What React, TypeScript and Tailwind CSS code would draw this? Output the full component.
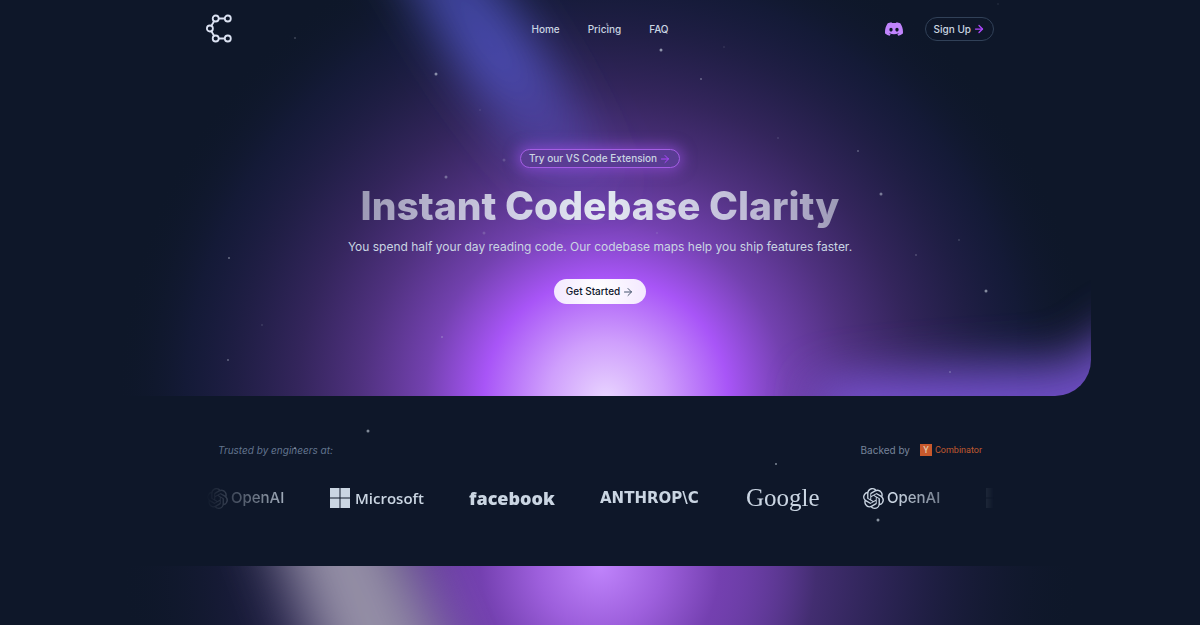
import React from 'react';
import { ArrowRight } from 'lucide-react';
import { SiDiscord, SiOpenai } from 'react-icons/si';

interface Star {
  x: number;
  y: number;
  r: number;
  opacity: number;
}

const stars: Star[] = [
  { x: 436, y: 74, r: 1.5, opacity: 0.6 },
  { x: 661, y: 50, r: 1.5, opacity: 0.65 },
  { x: 607, y: 24, r: 1.2, opacity: 0.35 },
  { x: 701, y: 79, r: 1, opacity: 0.4 },
  { x: 724, y: 47, r: 0.8, opacity: 0.2 },
  { x: 295, y: 38, r: 1, opacity: 0.25 },
  { x: 480, y: 110, r: 0.8, opacity: 0.2 },
  { x: 446, y: 177, r: 1.5, opacity: 0.4 },
  { x: 504, y: 160, r: 1.5, opacity: 0.2 },
  { x: 484, y: 233, r: 1.5, opacity: 0.2 },
  { x: 657, y: 233, r: 1, opacity: 0.15 },
  { x: 778, y: 138, r: 1, opacity: 0.15 },
  { x: 858, y: 151, r: 1, opacity: 0.35 },
  { x: 881, y: 194, r: 1.5, opacity: 0.5 },
  { x: 959, y: 240, r: 1, opacity: 0.2 },
  { x: 916, y: 255, r: 1, opacity: 0.25 },
  { x: 986, y: 291, r: 1.5, opacity: 0.6 },
  { x: 950, y: 372, r: 1, opacity: 0.3 },
  { x: 229, y: 258, r: 1, opacity: 0.45 },
  { x: 262, y: 325, r: 1, opacity: 0.15 },
  { x: 228, y: 360, r: 1, opacity: 0.4 },
  { x: 442, y: 337, r: 1, opacity: 0.3 },
  { x: 368, y: 431, r: 1.5, opacity: 0.6 },
  { x: 295, y: 448, r: 1, opacity: 0.5 },
  { x: 776, y: 464, r: 1, opacity: 0.6 },
  { x: 878, y: 520, r: 1.5, opacity: 0.65 },
  { x: 998, y: 4, r: 0.8, opacity: 0.15 },
];

const navLinks = ['Home', 'Pricing', 'FAQ'];

const Starfield: React.FC = () => (
  <svg
    className="pointer-events-none absolute top-0 left-1/2 z-20 -translate-x-1/2"
    width="1200"
    height="625"
    aria-hidden="true"
  >
    {stars.map(star => (
      <circle key={`${star.x}-${star.y}`} cx={star.x} cy={star.y} r={star.r} fill="#cbd5e1" opacity={star.opacity} />
    ))}
  </svg>
);

const HeroGlow: React.FC = () => (
  <div className="pointer-events-none absolute inset-y-0 left-1/2 w-[982px] -translate-x-1/2 overflow-hidden rounded-br-[36px]">
    <svg className="absolute bottom-0 left-0" width="982" height="396" aria-hidden="true">
      <defs>
        <radialGradient id="hero-core" gradientUnits="userSpaceOnUse" cx="497" cy="400" r="490">
          <stop offset="0" stopColor="#e9d5ff" />
          <stop offset="0.12" stopColor="#cf9ffc" />
          <stop offset="0.25" stopColor="#a855f7" />
          <stop offset="0.37" stopColor="#a255ee" stopOpacity="0.68" />
          <stop offset="0.5" stopColor="#9c50e4" stopOpacity="0.46" />
          <stop offset="0.63" stopColor="#9048d8" stopOpacity="0.29" />
          <stop offset="0.75" stopColor="#7a42d0" stopOpacity="0.17" />
          <stop offset="0.86" stopColor="#5038c0" stopOpacity="0.09" />
          <stop offset="1" stopColor="#0f172a" stopOpacity="0" />
        </radialGradient>
        <linearGradient id="hero-beam" x1="0" y1="0" x2="0" y2="1">
          <stop offset="0" stopColor="#6366f1" stopOpacity="0.5" />
          <stop offset="0.5" stopColor="#6366f1" stopOpacity="0.62" />
          <stop offset="1" stopColor="#6366f1" stopOpacity="0" />
        </linearGradient>
        <filter id="hero-blur" x="-60%" y="-60%" width="220%" height="220%">
          <feGaussianBlur stdDeviation="24" />
        </filter>
        <filter id="corner-blur" x="-60%" y="-200%" width="220%" height="500%">
          <feGaussianBlur stdDeviation="24" />
        </filter>
      </defs>
      <rect width="982" height="396" fill="url(#hero-core)" />
      <path d="M260 -80 L340 -80 L400 0 L530 210 L440 210 L320 20 Z" fill="url(#hero-beam)" filter="url(#hero-blur)" />
      <path
        d="M700 385 C780 370 880 368 960 362 L1015 320 L1060 320 L1060 480 L740 480 Z"
        fill="#8058e0"
        opacity="0.85"
        filter="url(#corner-blur)"
      />
    </svg>
  </div>
);

const FooterGlow: React.FC = () => (
  <svg
    className="pointer-events-none absolute top-0 left-1/2 -translate-x-1/2"
    width="982"
    height="400"
    aria-hidden="true"
  >
    <defs>
      <radialGradient id="lower-core" gradientUnits="userSpaceOnUse" cx="491" cy="0" r="480">
        <stop offset="0" stopColor="#c084fc" />
        <stop offset="0.13" stopColor="#9d5fdc" />
        <stop offset="0.25" stopColor="#7440b0" />
        <stop offset="0.45" stopColor="#a055f0" stopOpacity="0.36" />
        <stop offset="0.7" stopColor="#8048d8" stopOpacity="0.14" />
        <stop offset="1" stopColor="#0f172a" stopOpacity="0" />
      </radialGradient>
      <filter id="lower-blur" x="-60%" y="-60%" width="220%" height="220%">
        <feGaussianBlur stdDeviation="30" />
      </filter>
    </defs>
    <rect width="982" height="400" fill="url(#lower-core)" />
    <path d="M140 -100 L255 -100 L380 190 L250 190 Z" fill="#a39fb0" opacity="0.88" filter="url(#lower-blur)" />
  </svg>
);

const BrandMark: React.FC = () => (
  <svg width="28" height="30" viewBox="0 0 28 30" fill="none" stroke="#dbe2f2" strokeWidth="1.8" aria-hidden="true">
    <path d="M12.800 4.500h6M8.200 7 5.300 12M5.300 17l2.900 5M12.800 24.500h6" />
    <circle cx="9.700" cy="4.500" r="3" />
    <circle cx="21.800" cy="4.500" r="3" />
    <circle cx="3.900" cy="14.500" r="3" />
    <circle cx="9.700" cy="24.500" r="3" />
    <circle cx="21.800" cy="24.500" r="3" />
  </svg>
);

const OpenAILogo: React.FC = () => (
  <div className="flex w-[78px] shrink-0 items-center gap-[3px]">
    <SiOpenai size={21} className="shrink-0" />
    <span className="text-[15px] font-medium">OpenAI</span>
  </div>
);

const MicrosoftTiles: React.FC = () => (
  <svg width="20" height="20" viewBox="0 0 20 20" fill="currentColor" className="shrink-0" aria-hidden="true">
    <path d="M0 0h9.500v9.500H0zM10.500 0H20v9.500h-9.500zM0 10.500h9.500V20H0zM10.500 10.500H20V20h-9.500z" />
  </svg>
);

const App: React.FC = () => {
  return (
    <div className="relative flex min-h-screen flex-col overflow-hidden bg-[#0e1729] font-['Inter',sans-serif] text-slate-300">
      <Starfield />

      <div className="relative pb-[92px]">
        <HeroGlow />

        <header className="relative mx-auto flex h-[58px] w-full max-w-[788px] items-center">
          <div className="flex-1">
            <a href="#home" className="inline-block align-middle" aria-label="Homepage">
              <BrandMark />
            </a>
          </div>
          <nav className="flex items-center gap-7 text-[10px] font-medium">
            {navLinks.map(link => (
              <a key={link} href={`#${link.toLowerCase()}`}>{link}</a>
            ))}
          </nav>
          <div className="flex flex-1 items-center justify-end gap-[22px]">
            <a href="#discord" aria-label="Discord" className="text-[#c084fc]">
              <SiDiscord size={18} />
            </a>
            <a
              href="#signup"
              className="flex h-6 items-center gap-[2px] rounded-full border border-slate-700 px-2 text-[10px] font-medium"
            >
              Sign Up <ArrowRight size={12} strokeWidth={2.5} className="text-purple-500" />
            </a>
          </div>
        </header>

        <main className="relative flex flex-col items-center pt-[91px]">
          <a
            href="#extension"
            className="flex h-[19px] items-center gap-[2px] rounded-full border border-[#a45ee4] bg-[#5a3c94] px-2 text-[10px] font-medium shadow-[0_0_14px_3px_rgba(168,85,247,0.5)]"
          >
            Try our VS Code Extension <ArrowRight size={12} className="text-purple-500" />
          </a>
          <h1 className="mt-3 bg-gradient-to-r from-slate-200/60 via-slate-200 to-slate-200/60 bg-clip-text text-[39px] leading-[52px] font-extrabold text-transparent">
            Instant Codebase Clarity
          </h1>
          <p className="mt-[5px] text-[12px] leading-5 text-slate-300">
            You spend half your day reading code. Our codebase maps help you ship features faster.
          </p>
          <button
            type="button"
            className="mt-[22px] flex h-[25px] items-center gap-[2px] rounded-full bg-[radial-gradient(circle,#ffffff,#f3e8ff)] px-3 text-[10px] font-medium text-slate-900"
          >
            Get Started <ArrowRight size={12} className="text-slate-600" />
          </button>
        </main>
      </div>

      <section className="mx-auto h-[170px] w-full max-w-[788px] pt-[44px]">
        <div className="flex items-center justify-between px-3 text-[10px] leading-5">
          <p className="text-slate-500 italic">Trusted by engineers at:</p>
          <div className="flex items-center gap-[10px] text-[#76839a]">
            <span>Backed by</span>
            <div className="flex items-center gap-[3px] font-['Roboto',sans-serif] text-[9px] text-[#c05a30]">
              <span className="flex h-3 w-3 items-center justify-center bg-[#c8592c] font-medium text-[#e2c4a8]">Y</span>
              Combinator
            </div>
          </div>
        </div>
        <div className="mt-[22px] flex h-[32px] items-center gap-[45px] overflow-hidden pl-px [mask-image:linear-gradient(to_right,transparent,black_100px,black_calc(100%-100px),transparent)]">
          <OpenAILogo />
          <div className="flex w-[94px] shrink-0 items-center gap-[5px]">
            <MicrosoftTiles />
            <span className="font-['Open_Sans',sans-serif] text-[15px] font-semibold">Microsoft</span>
          </div>
          <span className="w-[86px] shrink-0 font-['Open_Sans',sans-serif] text-[18px] font-extrabold">facebook</span>
          <span className="w-[101px] shrink-0 font-['DejaVu_Sans',sans-serif] text-[15px] font-bold">ANTHROP\C</span>
          <span className="w-[72px] shrink-0 font-['Liberation_Serif',serif] text-[25px] leading-7">Google</span>
          <OpenAILogo />
          <MicrosoftTiles />
        </div>
      </section>

      <section className="relative flex-1 overflow-hidden">
        <FooterGlow />
      </section>
    </div>
  );
};

export default App;
